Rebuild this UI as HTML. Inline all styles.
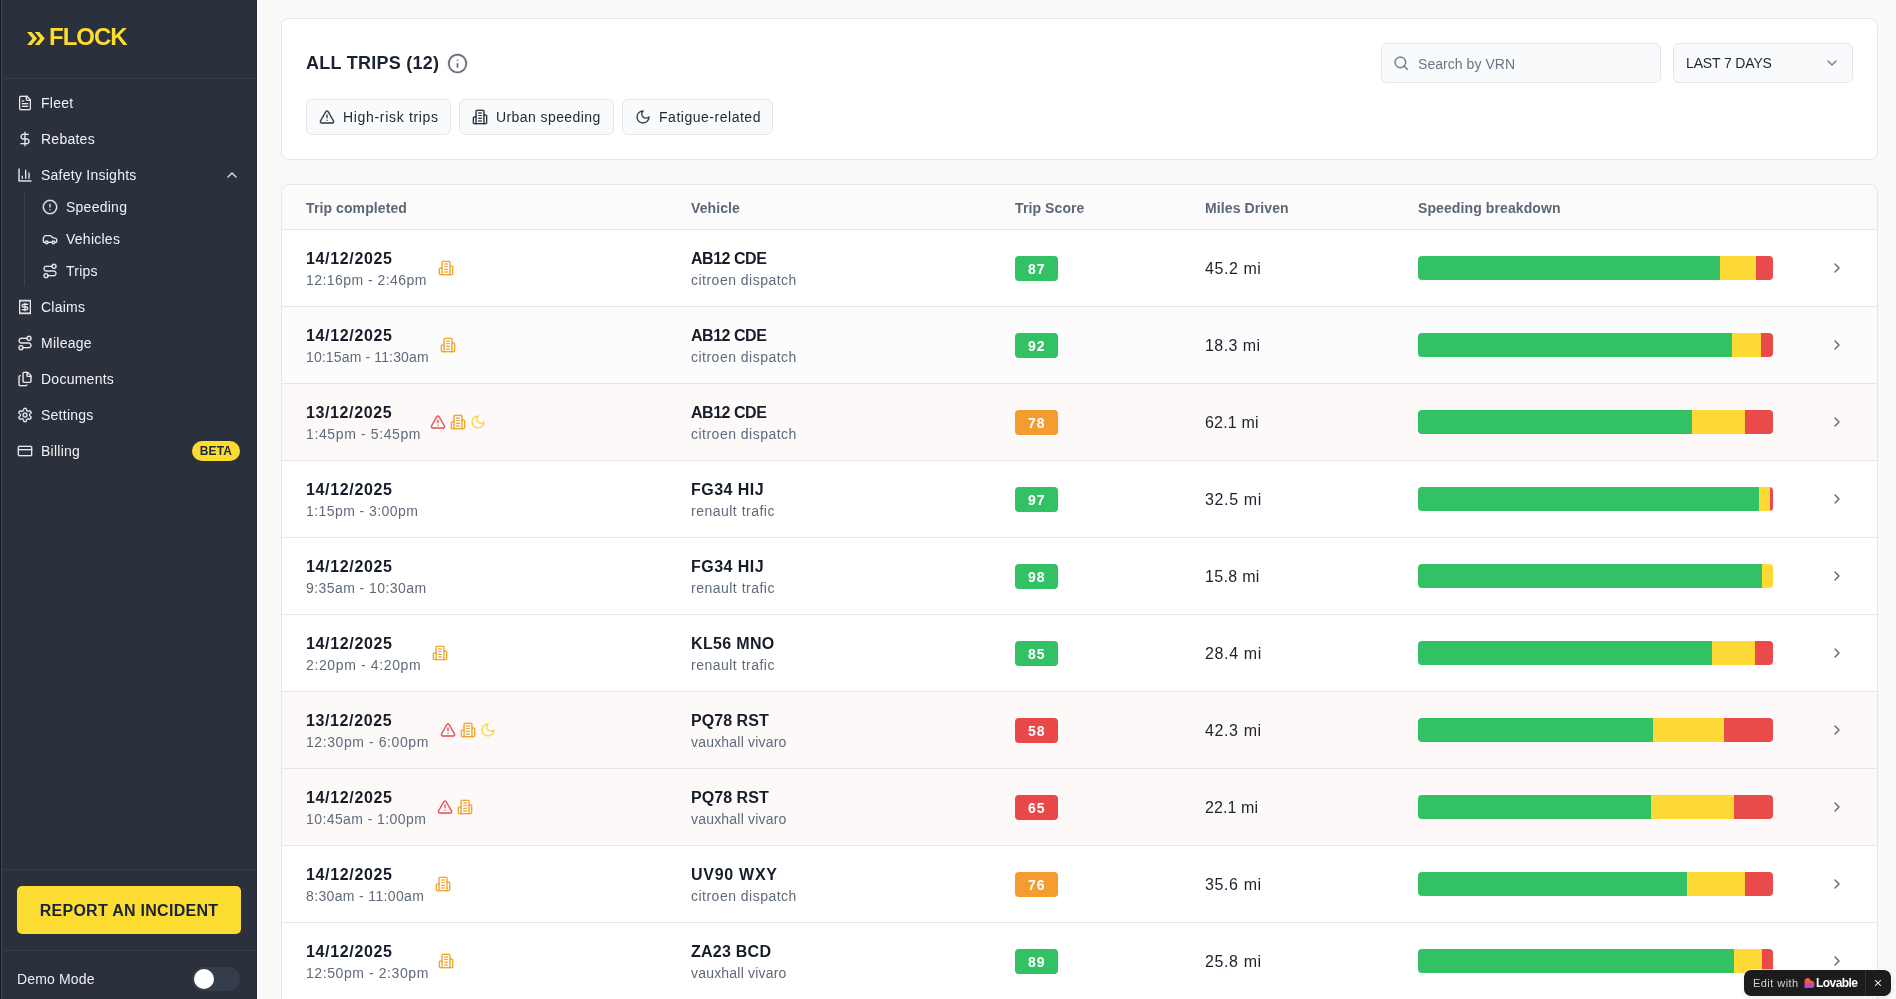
<!DOCTYPE html>
<html><head><meta charset="utf-8">
<style>
*{box-sizing:border-box;margin:0;padding:0}
html,body{width:1896px;height:999px;overflow:hidden}
body{font-family:"Liberation Sans",sans-serif;background:#f9f9fa;position:relative;color:#1a202c}
svg{display:block}
.ic{fill:none;stroke:currentColor;stroke-width:2;stroke-linecap:round;stroke-linejoin:round}
#side{position:absolute;left:0;top:0;width:257px;height:999px;background:#2b313c;border-left:1px solid #101a20;border-right:1px solid #232a36}
#side .edge{position:absolute;left:256px;top:0;width:1px;height:999px;background:#ffffff}
#side .edge2{position:absolute;left:0;top:0;width:1px;height:999px;background:#434a55}
.logo{position:absolute;left:26px;top:24px;color:#fddc32;font-weight:bold;font-size:24px;height:24px}
.hr{position:absolute;left:0;width:255px;height:1px;background:#363e4b}
.nav{position:absolute;left:0;width:256px;height:24px;color:#f1f2f4;font-size:14px}
.nav svg{position:absolute;left:16px;top:4px;width:16px;height:16px;color:#e8eaed}
.nav span{position:absolute;left:39.5px;top:4px;line-height:17px;letter-spacing:0.25px}
.nav.sub svg{left:41px}
.nav.sub span{left:65px}
#main{position:absolute;left:0;top:0;right:0;bottom:0}

.card{position:absolute;background:#fff;border:1px solid #e3e6eb;border-radius:8px;overflow:hidden}
.title{position:absolute;left:306px;top:52px;font-size:18px;font-weight:bold;color:#1b2230;letter-spacing:0.25px;line-height:22px}
.chip{position:absolute;top:99px;height:36px;border:1px solid #e2e5ea;border-radius:6px;background:#f9fafb;color:#1f2633;font-size:14px}
.chip svg{position:absolute;left:12px;top:8.5px;width:16px;height:16px;color:#2a3140}
.chip span{position:absolute;left:36px;top:9px;line-height:17px;letter-spacing:0.5px;white-space:nowrap}
.inp{position:absolute;top:43px;height:40px;border:1px solid #e2e5ea;border-radius:6px;background:#f9fafb;font-size:14px}
.thead{position:absolute;left:282px;top:185px;width:1595px;height:45px;background:#fbfbfc;border-bottom:1px solid #e3e6eb;border-radius:7px 7px 0 0}
.th{position:absolute;top:14.5px;font-size:14px;font-weight:bold;color:#5b6677;line-height:17px;white-space:nowrap;letter-spacing:0.1px}
.row{position:absolute;left:282px;width:1595px;height:77px;border-bottom:1px solid #e3e6eb}
.row>div{position:absolute;white-space:nowrap}
.d1{left:24px;top:19px;font-size:16px;font-weight:bold;color:#161d29;line-height:19px;letter-spacing:0.55px}
.d2{left:24px;top:42px;font-size:14px;color:#5f6b7b;line-height:17px;letter-spacing:0.55px}
.flags{top:30px;height:16px}
.fi{position:absolute;top:0;width:16px;height:16px}
.v1{left:409px;top:19px;font-size:16px;font-weight:bold;color:#161d29;line-height:19px;letter-spacing:-0.45px}
.v2{left:409px;top:42px;font-size:14px;color:#5f6b7b;line-height:17px;letter-spacing:0.4px}
.score{left:733px;top:26px;height:25px;width:42.5px;border-radius:4px;color:#fff;font-size:14px;font-weight:bold;text-align:center;line-height:27px;letter-spacing:1px;text-indent:1px}
.miles{left:923px;top:29px;font-size:16px;color:#1b2230;line-height:19px;letter-spacing:0.5px}
.bar{left:1136px;top:26px;width:355px;height:24px;border-radius:4px;overflow:hidden;display:flex}
.bar i{display:block;height:24px}
.chev{position:absolute;left:1547px;top:30px;width:16px;height:16px;color:#535d6c;stroke-width:1.9}
body *{will-change:transform}</style></head>
<body>
<div id="side">
  <div class="edge"></div><div class="edge2"></div>
  <div class="logo">
    <svg width="18" height="13" style="position:absolute;left:0;top:8px" viewBox="0 0 18 13"><path fill="#fddc32" d="M0 0h4.6l5.5 6.5-5.5 6.5H0l5.5-6.5z M7.7 0h4.6l5.5 6.5-5.5 6.5H7.7l5.5-6.5z"/></svg>
    <span style="position:absolute;left:22px;top:1px;line-height:24px;letter-spacing:-1px">FLOCK</span>
  </div>
  <div class="hr" style="top:78px"></div>

  <div class="nav" style="top:91px"><svg viewBox="0 0 24 24" class="ic"><path d="M15 2H6a2 2 0 0 0-2 2v16a2 2 0 0 0 2 2h12a2 2 0 0 0 2-2V7Z"/><path d="M14 2v4a2 2 0 0 0 2 2h4"/><path d="M10 9H8"/><path d="M16 13H8"/><path d="M16 17H8"/></svg><span>Fleet</span></div>
  <div class="nav" style="top:127px"><svg viewBox="0 0 24 24" class="ic"><line x1="12" x2="12" y1="2" y2="22"/><path d="M17 5H9.5a3.5 3.5 0 0 0 0 7h5a3.5 3.5 0 0 1 0 7H6"/></svg><span>Rebates</span></div>
  <div class="nav" style="top:163px"><svg viewBox="0 0 24 24" class="ic"><path d="M3 3v18h18"/><path d="M18 17V9"/><path d="M13 17V5"/><path d="M8 17v-3"/></svg><span>Safety Insights</span>
    <svg viewBox="0 0 24 24" class="ic" style="left:223px;top:4px;width:16px;height:16px"><path d="m18 15-6-6-6 6"/></svg></div>
  <div class="subline" style="position:absolute;left:23px;top:191px;width:1px;height:95px;background:#3a4350"></div>
  <div class="nav sub" style="top:195px"><svg viewBox="0 0 24 24" class="ic"><circle cx="12" cy="12" r="10"/><line x1="12" x2="12" y1="8" y2="12"/><line x1="12" x2="12.01" y1="16" y2="16"/></svg><span>Speeding</span></div>
  <div class="nav sub" style="top:227px"><svg viewBox="0 0 24 24" class="ic"><path d="M19 17h2c.6 0 1-.4 1-1v-3c0-.9-.7-1.7-1.5-1.9C18.7 10.6 16 10 16 10s-1.3-1.4-2.2-2.3c-.5-.4-1.1-.7-1.8-.7H5c-.6 0-1.1.4-1.4.9l-1.4 2.9A3.7 3.7 0 0 0 2 12v4c0 .6.4 1 1 1h2"/><circle cx="7" cy="17" r="2"/><path d="M9 17h6"/><circle cx="17" cy="17" r="2"/></svg><span>Vehicles</span></div>
  <div class="nav sub" style="top:259px"><svg viewBox="0 0 24 24" class="ic"><circle cx="6" cy="19" r="3"/><path d="M9 19h8.5a3.5 3.5 0 0 0 0-7h-11a3.5 3.5 0 0 1 0-7H15"/><circle cx="18" cy="5" r="3"/></svg><span>Trips</span></div>
  <div class="nav" style="top:295px"><svg viewBox="0 0 24 24" class="ic"><path d="M4 2v20l2-1 2 1 2-1 2 1 2-1 2 1 2-1 2 1V2l-2 1-2-1-2 1-2-1-2 1-2-1-2 1Z"/><path d="M16 8h-6a2 2 0 1 0 0 4h4a2 2 0 1 1 0 4H8"/><path d="M12 17.5v-11"/></svg><span>Claims</span></div>
  <div class="nav" style="top:331px"><svg viewBox="0 0 24 24" class="ic"><circle cx="6" cy="19" r="3"/><path d="M9 19h8.5a3.5 3.5 0 0 0 0-7h-11a3.5 3.5 0 0 1 0-7H15"/><circle cx="18" cy="5" r="3"/></svg><span>Mileage</span></div>
  <div class="nav" style="top:367px"><svg viewBox="0 0 24 24" class="ic"><path d="M15 2h-4a2 2 0 0 0-2 2v11a2 2 0 0 0 2 2h8a2 2 0 0 0 2-2V8"/><path d="M16.706 2.706A2.4 2.4 0 0 0 15 2v5a1 1 0 0 0 1 1h5a2.4 2.4 0 0 0-.706-1.706z"/><path d="M5 7a2 2 0 0 0-2 2v11a2 2 0 0 0 2 2h8a2 2 0 0 0 1.732-1"/></svg><span>Documents</span></div>
  <div class="nav" style="top:403px"><svg viewBox="0 0 24 24" class="ic"><path d="M12.22 2h-.44a2 2 0 0 0-2 2v.18a2 2 0 0 1-1 1.73l-.43.25a2 2 0 0 1-2 0l-.15-.08a2 2 0 0 0-2.730.73l-.22.38a2 2 0 0 0 .73 2.73l.15.1a2 2 0 0 1 1 1.72v.51a2 2 0 0 1-1 1.74l-.15.09a2 2 0 0 0-.73 2.73l.22.38a2 2 0 0 0 2.73.73l.15-.08a2 2 0 0 1 2 0l.43.25a2 2 0 0 1 1 1.73V20a2 2 0 0 0 2 2h.44a2 2 0 0 0 2-2v-.18a2 2 0 0 1 1-1.73l.43-.25a2 2 0 0 1 2 0l.15.08a2 2 0 0 0 2.73-.73l.22-.39a2 2 0 0 0-.73-2.730l-.15-.08a2 2 0 0 1-1-1.74v-.5a2 2 0 0 1 1-1.74l.15-.09a2 2 0 0 0 .73-2.73l-.22-.38a2 2 0 0 0-2.73-.73l-.15.08a2 2 0 0 1-2 0l-.43-.25a2 2 0 0 1-1-1.73V4a2 2 0 0 0-2-2z"/><circle cx="12" cy="12" r="3"/></svg><span>Settings</span></div>
  <div class="nav" style="top:439px"><svg viewBox="0 0 24 24" class="ic"><rect width="20" height="14" x="2" y="5" rx="2"/><line x1="2" x2="22" y1="10" y2="10"/></svg><span>Billing</span>
    <div style="position:absolute;left:191px;top:2px;width:48px;height:20px;border-radius:10px;background:#fddc32;color:#1f2937;font-size:12px;font-weight:bold;text-align:center;line-height:20px;letter-spacing:0.15px">BETA</div></div>
  <div class="hr" style="top:869px"></div>
  <div style="position:absolute;left:16px;top:886px;width:224px;height:48px;background:#fddc32;border-radius:5px;color:#1a2333;font-weight:bold;font-size:16px;text-align:center;line-height:50px;letter-spacing:0.28px">REPORT AN INCIDENT</div>
  <div class="hr" style="top:950px"></div>
  <div style="position:absolute;left:16px;top:971px;color:#eceef1;font-size:14px;line-height:17px;letter-spacing:0.15px">Demo Mode</div>
  <div style="position:absolute;left:191px;top:967px;width:48px;height:24px;border-radius:12px;background:#353d4a">
    <div style="position:absolute;left:2px;top:2px;width:20px;height:20px;border-radius:10px;background:#fff"></div></div>
</div>
<div id="main">
  <div class="card" style="left:281px;top:18px;width:1597px;height:142px"></div>
  <div class="title">ALL TRIPS (12)</div>
  <svg class="ic" viewBox="0 0 24 24" style="position:absolute;left:447px;top:52.5px;width:21px;height:21px;color:#4b5563;stroke-width:1.75"><circle cx="12" cy="12" r="10"/><path d="M12 16v-4"/><path d="M12 8h.01"/></svg>
  <div class="chip" style="left:306px;width:145px"><svg class="ic" viewBox="0 0 24 24"><path d="m21.73 18-8-14a2 2 0 0 0-3.48 0l-8 14A2 2 0 0 0 4 21h16a2 2 0 0 0 1.73-3"/><path d="M12 9v4"/><path d="M12 17h.01"/></svg><span style="letter-spacing:0.68px">High-risk trips</span></div>
  <div class="chip" style="left:459px;width:155px"><svg class="ic" viewBox="0 0 24 24"><path d="M6 22V4a2 2 0 0 1 2-2h8a2 2 0 0 1 2 2v18Z"/><path d="M6 12H4a2 2 0 0 0-2 2v6a2 2 0 0 0 2 2h2"/><path d="M18 9h2a2 2 0 0 1 2 2v9a2 2 0 0 1-2 2h-2"/><path d="M10 6h4"/><path d="M10 10h4"/><path d="M10 14h4"/><path d="M10 18h4"/></svg><span style="letter-spacing:0.42px">Urban speeding</span></div>
  <div class="chip" style="left:622px;width:151px"><svg class="ic" viewBox="0 0 24 24"><path d="M12 3a6 6 0 0 0 9 9 9 9 0 1 1-9-9Z"/></svg><span style="letter-spacing:0.52px">Fatigue-related</span></div>
  <div class="inp" style="left:1381px;width:280px">
    <svg class="ic" viewBox="0 0 24 24" style="position:absolute;left:11px;top:11px;width:16px;height:16px;color:#6b7280"><circle cx="11" cy="11" r="8"/><path d="m21 21-4.3-4.3"/></svg>
    <span style="position:absolute;left:36px;top:12px;line-height:17px;color:#6b7584;letter-spacing:0.05px">Search by VRN</span></div>
  <div class="inp" style="left:1673px;width:180px">
    <span style="position:absolute;left:12px;top:10.5px;line-height:17px;color:#1f2633;letter-spacing:-0.15px">LAST 7 DAYS</span>
    <svg class="ic" viewBox="0 0 24 24" style="position:absolute;left:150px;top:11px;width:16px;height:16px;color:#6b7280;stroke-width:1.8"><path d="m6 9 6 6 6-6"/></svg></div>
  <div class="card" style="left:281px;top:184px;width:1597px;height:840px"></div>
  <div class="thead">
    <div class="th" style="left:24px">Trip completed</div>
    <div class="th" style="left:409px">Vehicle</div>
    <div class="th" style="left:733px">Trip Score</div>
    <div class="th" style="left:923px">Miles Driven</div>
    <div class="th" style="left:1136px">Speeding breakdown</div>
  </div>
<!--ROWS-->
<div class="row" style="top:230px;background:#ffffff">
 <div class="d1" style="letter-spacing:0.656px">14/12/2025</div><div class="d2" style="letter-spacing:0.453px">12:16pm - 2:46pm</div>
 <div class="flags" style="left:155.5px"><svg class="ic fi" style="left:0px;color:#f0a531" viewBox="0 0 24 24"><path d="M6 22V4a2 2 0 0 1 2-2h8a2 2 0 0 1 2 2v18Z"/><path d="M6 12H4a2 2 0 0 0-2 2v6a2 2 0 0 0 2 2h2"/><path d="M18 9h2a2 2 0 0 1 2 2v9a2 2 0 0 1-2 2h-2"/><path d="M10 6h4"/><path d="M10 10h4"/><path d="M10 14h4"/><path d="M10 18h4"/></svg></div>
 <div class="v1" style="letter-spacing:-0.471px">AB12 CDE</div><div class="v2" style="letter-spacing:0.487px">citroen dispatch</div>
 <div class="score" style="background:#33c165">87</div>
 <div class="miles" style="letter-spacing:0.567px">45.2 mi</div>
 <div class="bar"><i style="width:302px;background:#33c165"></i><i style="width:36px;background:#fcd934"></i><i style="width:17px;background:#e94a4a"></i></div>
 <svg class="ic chev" viewBox="0 0 24 24"><path d="m9 18 6-6-6-6"/></svg>
</div>
<div class="row" style="top:307px;background:#fcfcfd">
 <div class="d1" style="letter-spacing:0.656px">14/12/2025</div><div class="d2" style="letter-spacing:0.137px">10:15am - 11:30am</div>
 <div class="flags" style="left:157.5px"><svg class="ic fi" style="left:0px;color:#f0a531" viewBox="0 0 24 24"><path d="M6 22V4a2 2 0 0 1 2-2h8a2 2 0 0 1 2 2v18Z"/><path d="M6 12H4a2 2 0 0 0-2 2v6a2 2 0 0 0 2 2h2"/><path d="M18 9h2a2 2 0 0 1 2 2v9a2 2 0 0 1-2 2h-2"/><path d="M10 6h4"/><path d="M10 10h4"/><path d="M10 14h4"/><path d="M10 18h4"/></svg></div>
 <div class="v1" style="letter-spacing:-0.471px">AB12 CDE</div><div class="v2" style="letter-spacing:0.487px">citroen dispatch</div>
 <div class="score" style="background:#33c165">92</div>
 <div class="miles" style="letter-spacing:0.417px">18.3 mi</div>
 <div class="bar"><i style="width:314px;background:#33c165"></i><i style="width:29px;background:#fcd934"></i><i style="width:12px;background:#e94a4a"></i></div>
 <svg class="ic chev" viewBox="0 0 24 24"><path d="m9 18 6-6-6-6"/></svg>
</div>
<div class="row" style="top:384px;background:#fdf9f8">
 <div class="d1" style="letter-spacing:0.611px">13/12/2025</div><div class="d2" style="letter-spacing:0.621px">1:45pm - 5:45pm</div>
 <div class="flags" style="left:148px"><svg class="ic fi" style="left:0px;color:#e5484d" viewBox="0 0 24 24"><path d="m21.73 18-8-14a2 2 0 0 0-3.48 0l-8 14A2 2 0 0 0 4 21h16a2 2 0 0 0 1.73-3"/><path d="M12 9v4"/><path d="M12 17h.01"/></svg><svg class="ic fi" style="left:20px;color:#f0a531" viewBox="0 0 24 24"><path d="M6 22V4a2 2 0 0 1 2-2h8a2 2 0 0 1 2 2v18Z"/><path d="M6 12H4a2 2 0 0 0-2 2v6a2 2 0 0 0 2 2h2"/><path d="M18 9h2a2 2 0 0 1 2 2v9a2 2 0 0 1-2 2h-2"/><path d="M10 6h4"/><path d="M10 10h4"/><path d="M10 14h4"/><path d="M10 18h4"/></svg><svg class="ic fi" style="left:40px;color:#f7d23a" viewBox="0 0 24 24"><path d="M12 3a6 6 0 0 0 9 9 9 9 0 1 1-9-9Z"/></svg></div>
 <div class="v1" style="letter-spacing:-0.471px">AB12 CDE</div><div class="v2" style="letter-spacing:0.487px">citroen dispatch</div>
 <div class="score" style="background:#f39c2f">78</div>
 <div class="miles" style="letter-spacing:0.2px">62.1 mi</div>
 <div class="bar"><i style="width:274px;background:#33c165"></i><i style="width:53px;background:#fcd934"></i><i style="width:28px;background:#e94a4a"></i></div>
 <svg class="ic chev" viewBox="0 0 24 24"><path d="m9 18 6-6-6-6"/></svg>
</div>
<div class="row" style="top:461px;background:#ffffff">
 <div class="d1" style="letter-spacing:0.656px">14/12/2025</div><div class="d2" style="letter-spacing:0.429px">1:15pm - 3:00pm</div>
 <div class="flags" style="left:0px"></div>
 <div class="v1" style="letter-spacing:0.471px">FG34 HIJ</div><div class="v2" style="letter-spacing:0.492px">renault trafic</div>
 <div class="score" style="background:#33c165">97</div>
 <div class="miles" style="letter-spacing:0.633px">32.5 mi</div>
 <div class="bar"><i style="width:341px;background:#33c165"></i><i style="width:11px;background:#fcd934"></i><i style="width:3px;background:#e94a4a"></i></div>
 <svg class="ic chev" viewBox="0 0 24 24"><path d="m9 18 6-6-6-6"/></svg>
</div>
<div class="row" style="top:538px;background:#ffffff">
 <div class="d1" style="letter-spacing:0.656px">14/12/2025</div><div class="d2" style="letter-spacing:0.433px">9:35am - 10:30am</div>
 <div class="flags" style="left:0px"></div>
 <div class="v1" style="letter-spacing:0.471px">FG34 HIJ</div><div class="v2" style="letter-spacing:0.492px">renault trafic</div>
 <div class="score" style="background:#33c165">98</div>
 <div class="miles" style="letter-spacing:0.317px">15.8 mi</div>
 <div class="bar"><i style="width:344px;background:#33c165"></i><i style="width:11px;background:#fcd934"></i><i style="width:0px;background:#e94a4a"></i></div>
 <svg class="ic chev" viewBox="0 0 24 24"><path d="m9 18 6-6-6-6"/></svg>
</div>
<div class="row" style="top:615px;background:#ffffff">
 <div class="d1" style="letter-spacing:0.656px">14/12/2025</div><div class="d2" style="letter-spacing:0.629px">2:20pm - 4:20pm</div>
 <div class="flags" style="left:150.3px"><svg class="ic fi" style="left:0px;color:#f0a531" viewBox="0 0 24 24"><path d="M6 22V4a2 2 0 0 1 2-2h8a2 2 0 0 1 2 2v18Z"/><path d="M6 12H4a2 2 0 0 0-2 2v6a2 2 0 0 0 2 2h2"/><path d="M18 9h2a2 2 0 0 1 2 2v9a2 2 0 0 1-2 2h-2"/><path d="M10 6h4"/><path d="M10 10h4"/><path d="M10 14h4"/><path d="M10 18h4"/></svg></div>
 <div class="v1" style="letter-spacing:0.343px">KL56 MNO</div><div class="v2" style="letter-spacing:0.492px">renault trafic</div>
 <div class="score" style="background:#33c165">85</div>
 <div class="miles" style="letter-spacing:0.633px">28.4 mi</div>
 <div class="bar"><i style="width:294px;background:#33c165"></i><i style="width:43px;background:#fcd934"></i><i style="width:18px;background:#e94a4a"></i></div>
 <svg class="ic chev" viewBox="0 0 24 24"><path d="m9 18 6-6-6-6"/></svg>
</div>
<div class="row" style="top:692px;background:#fdf9f8">
 <div class="d1" style="letter-spacing:0.611px">13/12/2025</div><div class="d2" style="letter-spacing:0.58px">12:30pm - 6:00pm</div>
 <div class="flags" style="left:157.5px"><svg class="ic fi" style="left:0px;color:#e5484d" viewBox="0 0 24 24"><path d="m21.73 18-8-14a2 2 0 0 0-3.48 0l-8 14A2 2 0 0 0 4 21h16a2 2 0 0 0 1.73-3"/><path d="M12 9v4"/><path d="M12 17h.01"/></svg><svg class="ic fi" style="left:20px;color:#f0a531" viewBox="0 0 24 24"><path d="M6 22V4a2 2 0 0 1 2-2h8a2 2 0 0 1 2 2v18Z"/><path d="M6 12H4a2 2 0 0 0-2 2v6a2 2 0 0 0 2 2h2"/><path d="M18 9h2a2 2 0 0 1 2 2v9a2 2 0 0 1-2 2h-2"/><path d="M10 6h4"/><path d="M10 10h4"/><path d="M10 14h4"/><path d="M10 18h4"/></svg><svg class="ic fi" style="left:40px;color:#f7d23a" viewBox="0 0 24 24"><path d="M12 3a6 6 0 0 0 9 9 9 9 0 1 1-9-9Z"/></svg></div>
 <div class="v1" style="letter-spacing:0.043px">PQ78 RST</div><div class="v2" style="letter-spacing:0.2px">vauxhall vivaro</div>
 <div class="score" style="background:#e94848">58</div>
 <div class="miles" style="letter-spacing:0.617px">42.3 mi</div>
 <div class="bar"><i style="width:235px;background:#33c165"></i><i style="width:71px;background:#fcd934"></i><i style="width:49px;background:#e94a4a"></i></div>
 <svg class="ic chev" viewBox="0 0 24 24"><path d="m9 18 6-6-6-6"/></svg>
</div>
<div class="row" style="top:769px;background:#fdf9f8">
 <div class="d1" style="letter-spacing:0.656px">14/12/2025</div><div class="d2" style="letter-spacing:0.413px">10:45am - 1:00pm</div>
 <div class="flags" style="left:154.5px"><svg class="ic fi" style="left:0px;color:#e5484d" viewBox="0 0 24 24"><path d="m21.73 18-8-14a2 2 0 0 0-3.48 0l-8 14A2 2 0 0 0 4 21h16a2 2 0 0 0 1.73-3"/><path d="M12 9v4"/><path d="M12 17h.01"/></svg><svg class="ic fi" style="left:20px;color:#f0a531" viewBox="0 0 24 24"><path d="M6 22V4a2 2 0 0 1 2-2h8a2 2 0 0 1 2 2v18Z"/><path d="M6 12H4a2 2 0 0 0-2 2v6a2 2 0 0 0 2 2h2"/><path d="M18 9h2a2 2 0 0 1 2 2v9a2 2 0 0 1-2 2h-2"/><path d="M10 6h4"/><path d="M10 10h4"/><path d="M10 14h4"/><path d="M10 18h4"/></svg></div>
 <div class="v1" style="letter-spacing:0.043px">PQ78 RST</div><div class="v2" style="letter-spacing:0.2px">vauxhall vivaro</div>
 <div class="score" style="background:#e94848">65</div>
 <div class="miles" style="letter-spacing:0.083px">22.1 mi</div>
 <div class="bar"><i style="width:233px;background:#33c165"></i><i style="width:83px;background:#fcd934"></i><i style="width:39px;background:#e94a4a"></i></div>
 <svg class="ic chev" viewBox="0 0 24 24"><path d="m9 18 6-6-6-6"/></svg>
</div>
<div class="row" style="top:846px;background:#ffffff">
 <div class="d1" style="letter-spacing:0.656px">14/12/2025</div><div class="d2" style="letter-spacing:0.353px">8:30am - 11:00am</div>
 <div class="flags" style="left:153px"><svg class="ic fi" style="left:0px;color:#f0a531" viewBox="0 0 24 24"><path d="M6 22V4a2 2 0 0 1 2-2h8a2 2 0 0 1 2 2v18Z"/><path d="M6 12H4a2 2 0 0 0-2 2v6a2 2 0 0 0 2 2h2"/><path d="M18 9h2a2 2 0 0 1 2 2v9a2 2 0 0 1-2 2h-2"/><path d="M10 6h4"/><path d="M10 10h4"/><path d="M10 14h4"/><path d="M10 18h4"/></svg></div>
 <div class="v1" style="letter-spacing:0.729px">UV90 WXY</div><div class="v2" style="letter-spacing:0.487px">citroen dispatch</div>
 <div class="score" style="background:#f39c2f">76</div>
 <div class="miles" style="letter-spacing:0.617px">35.6 mi</div>
 <div class="bar"><i style="width:269px;background:#33c165"></i><i style="width:58px;background:#fcd934"></i><i style="width:28px;background:#e94a4a"></i></div>
 <svg class="ic chev" viewBox="0 0 24 24"><path d="m9 18 6-6-6-6"/></svg>
</div>
<div class="row" style="top:923px;background:#ffffff">
 <div class="d1" style="letter-spacing:0.656px">14/12/2025</div><div class="d2" style="letter-spacing:0.58px">12:50pm - 2:30pm</div>
 <div class="flags" style="left:156px"><svg class="ic fi" style="left:0px;color:#f0a531" viewBox="0 0 24 24"><path d="M6 22V4a2 2 0 0 1 2-2h8a2 2 0 0 1 2 2v18Z"/><path d="M6 12H4a2 2 0 0 0-2 2v6a2 2 0 0 0 2 2h2"/><path d="M18 9h2a2 2 0 0 1 2 2v9a2 2 0 0 1-2 2h-2"/><path d="M10 6h4"/><path d="M10 10h4"/><path d="M10 14h4"/><path d="M10 18h4"/></svg></div>
 <div class="v1" style="letter-spacing:0.243px">ZA23 BCD</div><div class="v2" style="letter-spacing:0.2px">vauxhall vivaro</div>
 <div class="score" style="background:#33c165">89</div>
 <div class="miles" style="letter-spacing:0.617px">25.8 mi</div>
 <div class="bar"><i style="width:316px;background:#33c165"></i><i style="width:28px;background:#fcd934"></i><i style="width:11px;background:#e94a4a"></i></div>
 <svg class="ic chev" viewBox="0 0 24 24"><path d="m9 18 6-6-6-6"/></svg>
</div>
<!--/ROWS-->
</div>
<div id="lov" style="position:absolute;left:1744px;top:970px;width:147px;height:26px;background:#1c1c1c;border-radius:7px;box-shadow:0 0 0 1px rgba(255,255,255,0.6),0 1px 4px rgba(0,0,0,0.15)">
  <span style="position:absolute;left:9px;top:6px;font-size:11px;line-height:14px;color:#d6d1ca;letter-spacing:0.45px">Edit with</span>
  <svg width="11" height="10" viewBox="0 0 11 10" style="position:absolute;left:60px;top:8px"><defs><linearGradient id="lg" x1="0" y1="0" x2="0" y2="1"><stop offset="0" stop-color="#ff6a1f"/><stop offset="0.5" stop-color="#f0476e"/><stop offset="1" stop-color="#7a5cf5"/></linearGradient></defs><path fill="url(#lg)" d="M0.5 3.5C0.5 1.5 2 0 3.8 0C5.5 0 6.2 1.3 6.5 2.5C8.5 2.5 10.5 4 10.5 6.5C10.5 8.5 9.5 10 7.5 10H0.5Z"/></svg>
  <span style="position:absolute;left:72px;top:5.5px;font-size:12px;line-height:14px;color:#fff;font-weight:bold;letter-spacing:-0.55px">Lovable</span>
  <div style="position:absolute;left:121px;top:0;width:1px;height:26px;background:#333"></div>
  <svg viewBox="0 0 24 24" class="ic" style="position:absolute;left:129px;top:8px;width:10px;height:10px;color:#e5e5e5;stroke-width:2.6"><path d="M18 6 6 18"/><path d="m6 6 12 12"/></svg>
</div>
</body></html>
